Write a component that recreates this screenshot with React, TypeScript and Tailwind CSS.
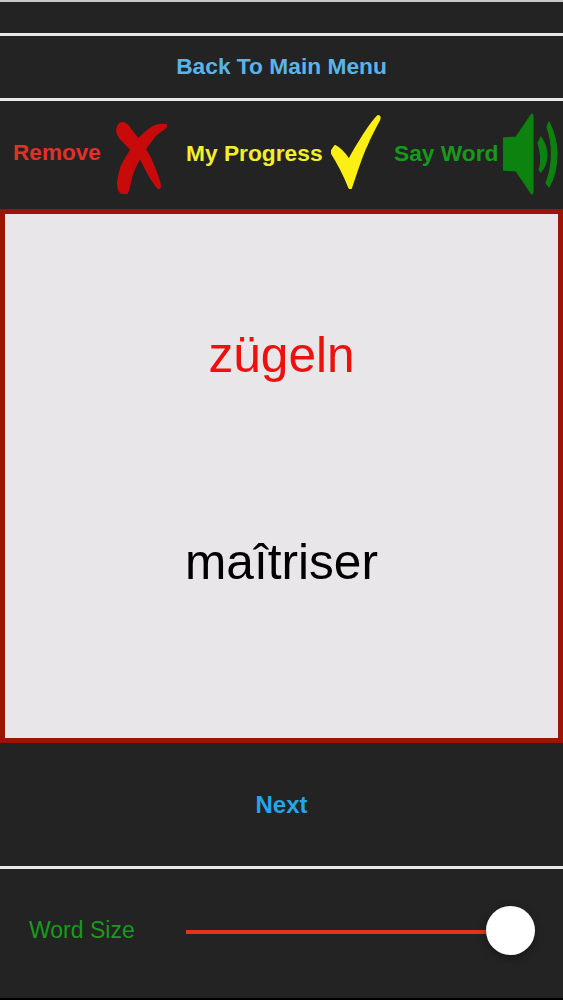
export default function App() {
  const sans = "font-['Liberation_Sans',Arial,sans-serif]";
  return (
    <div className={`w-[563px] h-[1000px] overflow-hidden bg-[#232323] flex flex-col ${sans}`}>
      <div className="h-[2px] bg-[#c9c9c9]" />
      <div className="h-[31px]" />
      <div className="h-[3px] bg-[#e8e8e8]" />
      <div className="h-[62px] pb-[2px] flex items-center justify-center text-[22.75px] font-bold text-[#5ab4ea]">
        Back To Main Menu
      </div>
      <div className="h-[3px] bg-[#e8e8e8]" />
      <div className="h-[108px] flex items-center pl-[13px]">
        <span className="mb-[4px] text-[22.6px] font-bold text-[#e0302a] w-[103px]">Remove</span>
        <svg viewBox="0 0 51 73" className="w-[51px] h-[73px] mt-[4px]">
          <g fill="#c80a0a" stroke="#c80a0a" strokeWidth="2" strokeLinejoin="round">
            <path d="M1 9C2 4 4 2 6 2C9 2 12 4 14 8L22 18C27 25 31 31 34 37C38 46 42 55 44 64Q44 68 42 67C38 62 35 57 32 52L24 36L14 27L4 17C2 14 1 12 1 9Z" />
            <path d="M50 4C45 3 41 4 37 6C31 10 26 14 22 19C18 24 15 29 12 34C8 40 5 46 4 51C3 55 2 59 2 62C2 67 3 71 6 72C8 73 10 73 11 72C13 68 14 62 15 57C17 50 20 43 24 37C28 29 32 23 37 17C40 13 45 10 49 7Q51 5 50 4Z" />
          </g>
        </svg>
        <span className="mb-[4px] ml-[19px] w-[145px] text-[22.75px] font-bold text-[#f2ee30] whitespace-nowrap">My Progress</span>
        <svg viewBox="0 0 50 74" className="w-[50px] h-[74px] mb-[6px]">
          <path fill="#fbef14" stroke="#fbef14" strokeWidth="2" strokeLinejoin="round" d="M47 1C49 1 49 3 48 5C44 13 39 22 35.7 30C31 39 27 52 20 73Q19 74 18 72C14 62 7 48 0 37L4 31C10 34 14 39 18 45C23 35 29 26 34 18C38 12 43 5 47 1Z" />
        </svg>
        <span className="mb-[4px] ml-[13px] w-[109px] text-[22.75px] font-bold text-[#169a1c] whitespace-nowrap">Say Word</span>
        <svg viewBox="0 0 55 82" className="w-[55px] h-[82px] mb-[2px]">
          <g fill="#0c820f" stroke="#0c820f" strokeWidth="1.2" strokeLinejoin="round">
            <path d="M0 25L13 24L28 2Q30 0 30 3L30 79Q30 82 28 80L13 58L0 57Z" />
            <path d="M38 24C42 30 44 36 44 42C44 48 42 54 38 59L36 57C38 52 38 47 37.5 42C37 37 36 33 35 30Z" />
            <path d="M46 9C51 19 54 30 54 41C54 53 51 65 46 74L43 70C47 60 48.5 50 48.5 41C48.5 32 47 22 44 14Z" />
          </g>
        </svg>
      </div>
      <div className="h-[534px] border-[5px] border-[#9c1408] bg-[#e8e6e8] flex flex-col items-center text-[49.6px] leading-none">
        <div className="mt-[117px] text-[#ee0f0f]">zügeln</div>
        <div className="mt-[157px] text-black">maîtriser</div>
      </div>
      <div className="h-[123px] flex items-center justify-center text-[24px] font-bold text-[#25a6ea]">Next</div>
      <div className="h-[3px] bg-[#e8e8e8]" />
      <div className="h-[129px] flex items-center pl-[29px] pr-[28px] pb-[7px]">
        <span className="w-[157px] text-[23px] text-[#189a1c] whitespace-nowrap">Word Size</span>
        <div className="flex-1 h-[4px] mt-[4px] bg-[#e2351c]" />
        <div className="w-[49px] h-[49px] rounded-full bg-white shadow-[0_3px_8px_rgba(0,0,0,0.35)]" />
      </div>
      <div className="flex-1 bg-black" />
    </div>
  );
}
